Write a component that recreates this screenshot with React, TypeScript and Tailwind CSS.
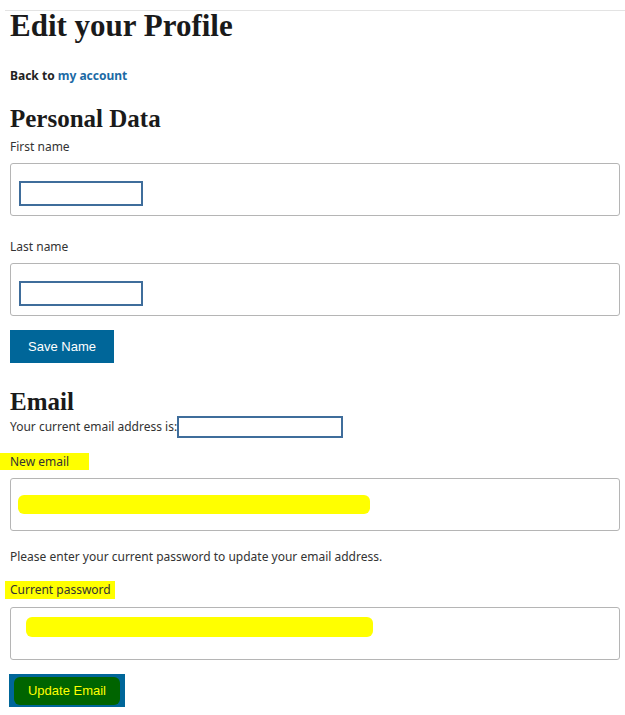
const serif = "font-['Liberation_Serif',serif]";

function OuterInput({ children }: { children?: React.ReactNode }) {
  return (
    <div className="flex h-[53px] w-[610px] items-center rounded-[3px] border border-[#b5b5b5] bg-white">
      {children}
    </div>
  );
}

function NameInput() {
  return (
    <div className="h-[53px] w-[610px] rounded-[3px] border border-[#b5b5b5] bg-white pl-[8px] pt-[17px]">
      <div className="h-[25px] w-[124px] border-2 border-[#3f6d9b]" />
    </div>
  );
}

export default function App() {
  return (
    <div className="h-[715px] w-[625px] overflow-hidden bg-white font-['Noto_Sans',sans-serif] text-[#333]">
      <div className="ml-[5px] mt-[10px] border-t border-[#e3e3e3]" />
      <div className="px-[10px]">
        <h1 className={`${serif} mt-[-2px] text-[31px] font-bold leading-[34px] text-[#1a1a1a]`}>
          Edit your Profile
        </h1>
        <p className="mt-[25px] text-[12px] font-bold leading-[16px] text-[#222]">
          Back to <a className="text-[#1b6aa5]">my account</a>
        </p>
        <h2 className={`${serif} mt-[21px] text-[25px] font-bold leading-[28px] text-[#1a1a1a]`}>
          Personal Data
        </h2>
        <label className="mt-[6px] block text-[12px] leading-[16px]">First name</label>
        <div className="mt-[8px]">
          <NameInput />
        </div>
        <label className="mt-[23px] block text-[12px] leading-[16px]">Last name</label>
        <div className="mt-[8px]">
          <NameInput />
        </div>
        <button className="mt-[14px] flex h-[33px] w-[104px] items-center justify-center bg-[#006699] font-['Liberation_Sans',sans-serif] text-[13px] text-white">
          Save Name
        </button>
        <h2 className={`${serif} mt-[25px] text-[25px] font-bold leading-[28px] text-[#1a1a1a]`}>
          Email
        </h2>
        <div className="flex items-center text-[12px] leading-[16px]">
          <span>Your current email address is:</span>
          <span className="h-[22px] w-[166px] border-2 border-[#3f6d9b]" />
        </div>
      </div>
      <div className="mt-[15px] flex h-[17px] w-[89px] items-center bg-[#ffff00] pl-[10px] text-[12px] leading-[16px]">
        New email
      </div>
      <div className="mt-[8px] px-[10px]">
        <OuterInput>
          <div className="ml-[7px] h-[19px] w-[352px] rounded-[6px] bg-[#ffff00]" />
        </OuterInput>
      </div>
      <p className="mt-[18px] px-[10px] text-[12px] leading-[16px]">
        Please enter your current password to update your email address.
      </p>
      <div className="ml-[5px] mt-[16px] flex h-[18px] w-[110px] items-center bg-[#ffff00] pl-[5px] text-[12px] leading-[16px]">
        Current password
      </div>
      <div className="mt-[8px] px-[10px]">
        <div className="h-[53px] w-[610px] rounded-[3px] border border-[#b5b5b5] bg-white pl-[15px] pt-[9px]">
          <div className="h-[20px] w-[347px] rounded-[6px] bg-[#ffff00]" />
        </div>
      </div>
      <button className="ml-[9px] mt-[14px] flex h-[33px] w-[116px] items-center justify-center bg-[#006699] px-[5px] pt-[3px] pb-[2px]">
        <span className="flex h-full w-full items-center justify-center rounded-[6px] bg-[#006400] font-['Liberation_Sans',sans-serif] text-[13px] text-[#ffff00]">
          Update Email
        </span>
      </button>
    </div>
  );
}
